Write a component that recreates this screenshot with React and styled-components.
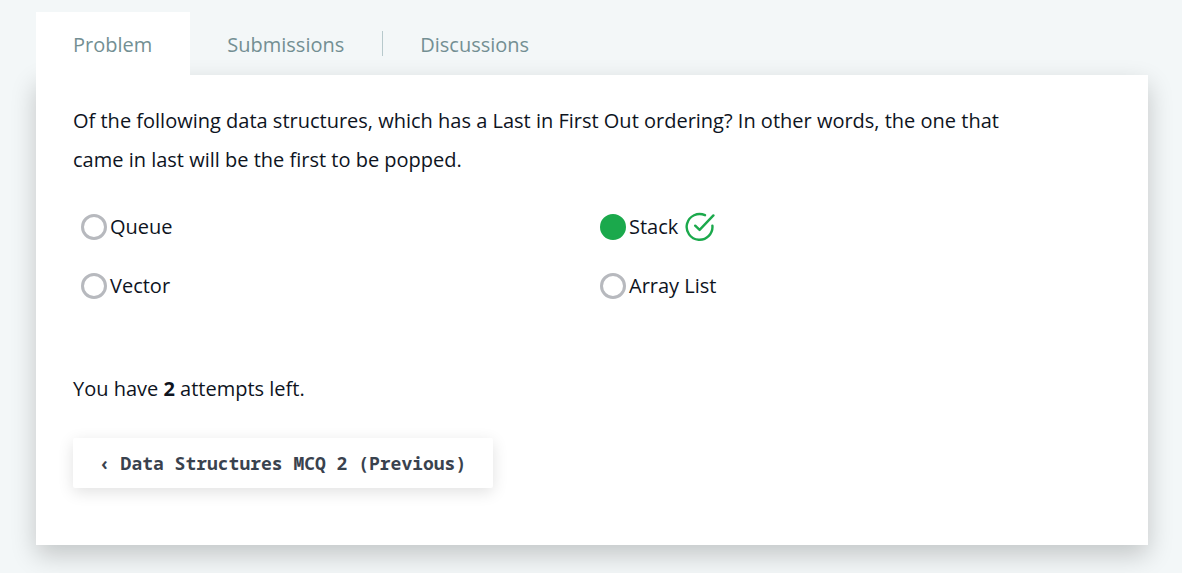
import React, { useState } from "react";
import styled, { createGlobalStyle } from "styled-components";

const GlobalStyle = createGlobalStyle`
  *, *::before, *::after { box-sizing: border-box; }
  body {
    margin: 0;
    background: #f3f7f8;
    color: #0e141e;
    font-family: "Open Sans", "Noto Sans", sans-serif;
    font-size: 20px;
    line-height: 28px;
  }
`;

const Page = styled.main`
  padding: 12px 34px 28px 36px;
`;

const Tabs = styled.nav`
  display: flex;
  position: relative;
  z-index: 1;
`;

const Tab = styled.a`
  display: flex;
  align-items: center;
  height: 63px;
  padding: 2px 38px 0 37px;
  color: #738f93;
  background: ${({ $active }) => ($active ? "#fff" : "transparent")};
  text-decoration: none;
`;

const Divider = styled.span`
  align-self: center;
  width: 1px;
  height: 25px;
  background: #b7c9cc;
`;

const Panel = styled.section`
  padding: 26px 37px 57px;
  background: #fff;
  box-shadow: 0 10px 24px rgba(0, 0, 0, 0.2);
`;

const Question = styled.p`
  max-width: 90%;
  margin: 0;
  line-height: 39px;
`;

const Options = styled.fieldset`
  display: grid;
  grid-template-columns: 1fr 1fr;
  row-gap: 31px;
  margin: 34px 0 0;
  padding: 0;
  border: 0;
`;

const Option = styled.label`
  display: flex;
  align-items: center;
  padding-left: 8px;
  cursor: pointer;
`;

const Radio = styled.input`
  appearance: none;
  flex: none;
  width: 26px;
  height: 26px;
  margin: 0 3px 0 0;
  border: 3px solid #b7b9be;
  border-radius: 50%;
  background: #fff;

  &:checked {
    border-color: #1ba94c;
    background: #1ba94c;
  }
`;

const CorrectIcon = styled.svg`
  width: 30px;
  height: 30px;
  margin: -1px 0 -1px 7px;
`;

const Attempts = styled.p`
  margin: 75px 0 35px;
`;

const PreviousButton = styled.button`
  height: 50px;
  padding: 0 27px 0 26px;
  border: 0;
  border-radius: 2px;
  background: #fff;
  box-shadow: 0 4px 16px rgba(0, 0, 0, 0.12);
  color: #39424e;
  font: bold 18px/24px "Noto Sans Mono", "DejaVu Sans Mono", monospace;
  cursor: pointer;
`;

const answers = ["Queue", "Stack", "Vector", "Array List"];
const correctAnswer = "Stack";

export default function App() {
  const [selected, setSelected] = useState(correctAnswer);
  return (
    <>
      <GlobalStyle />
      <Page>
        <Tabs>
          <Tab href="#problem" $active>Problem</Tab>
          <Tab href="#submissions">Submissions</Tab>
          <Divider />
          <Tab href="#discussions">Discussions</Tab>
        </Tabs>
        <Panel>
          <Question>
            Of the following data structures, which has a Last in First Out
            ordering? In other words, the one that came in last will be the
            first to be popped.
          </Question>
          <Options>
            {answers.map((answer) => (
              <Option key={answer}>
                <Radio
                  type="radio"
                  name="answer"
                  value={answer}
                  checked={selected === answer}
                  onChange={() => setSelected(answer)}
                />
                {answer}
                {selected === answer && answer === correctAnswer && (
                  <CorrectIcon
                    viewBox="0 0 30 30"
                    fill="none"
                    stroke="#1ba94c"
                    strokeWidth="2.4"
                    strokeLinecap="round"
                    strokeLinejoin="round"
                    aria-hidden="true"
                  >
                    <path d="M20 3.2A12.9 12.9 0 1 0 27.4 13.6" />
                    <path d="M10.2 13.7L14.6 17.9L28.4 3.4" />
                  </CorrectIcon>
                )}
              </Option>
            ))}
          </Options>
          <Attempts>
            You have <strong>2</strong> attempts left.
          </Attempts>
          <PreviousButton type="button">
            ‹ Data Structures MCQ 2 (Previous)
          </PreviousButton>
        </Panel>
      </Page>
    </>
  );
}
